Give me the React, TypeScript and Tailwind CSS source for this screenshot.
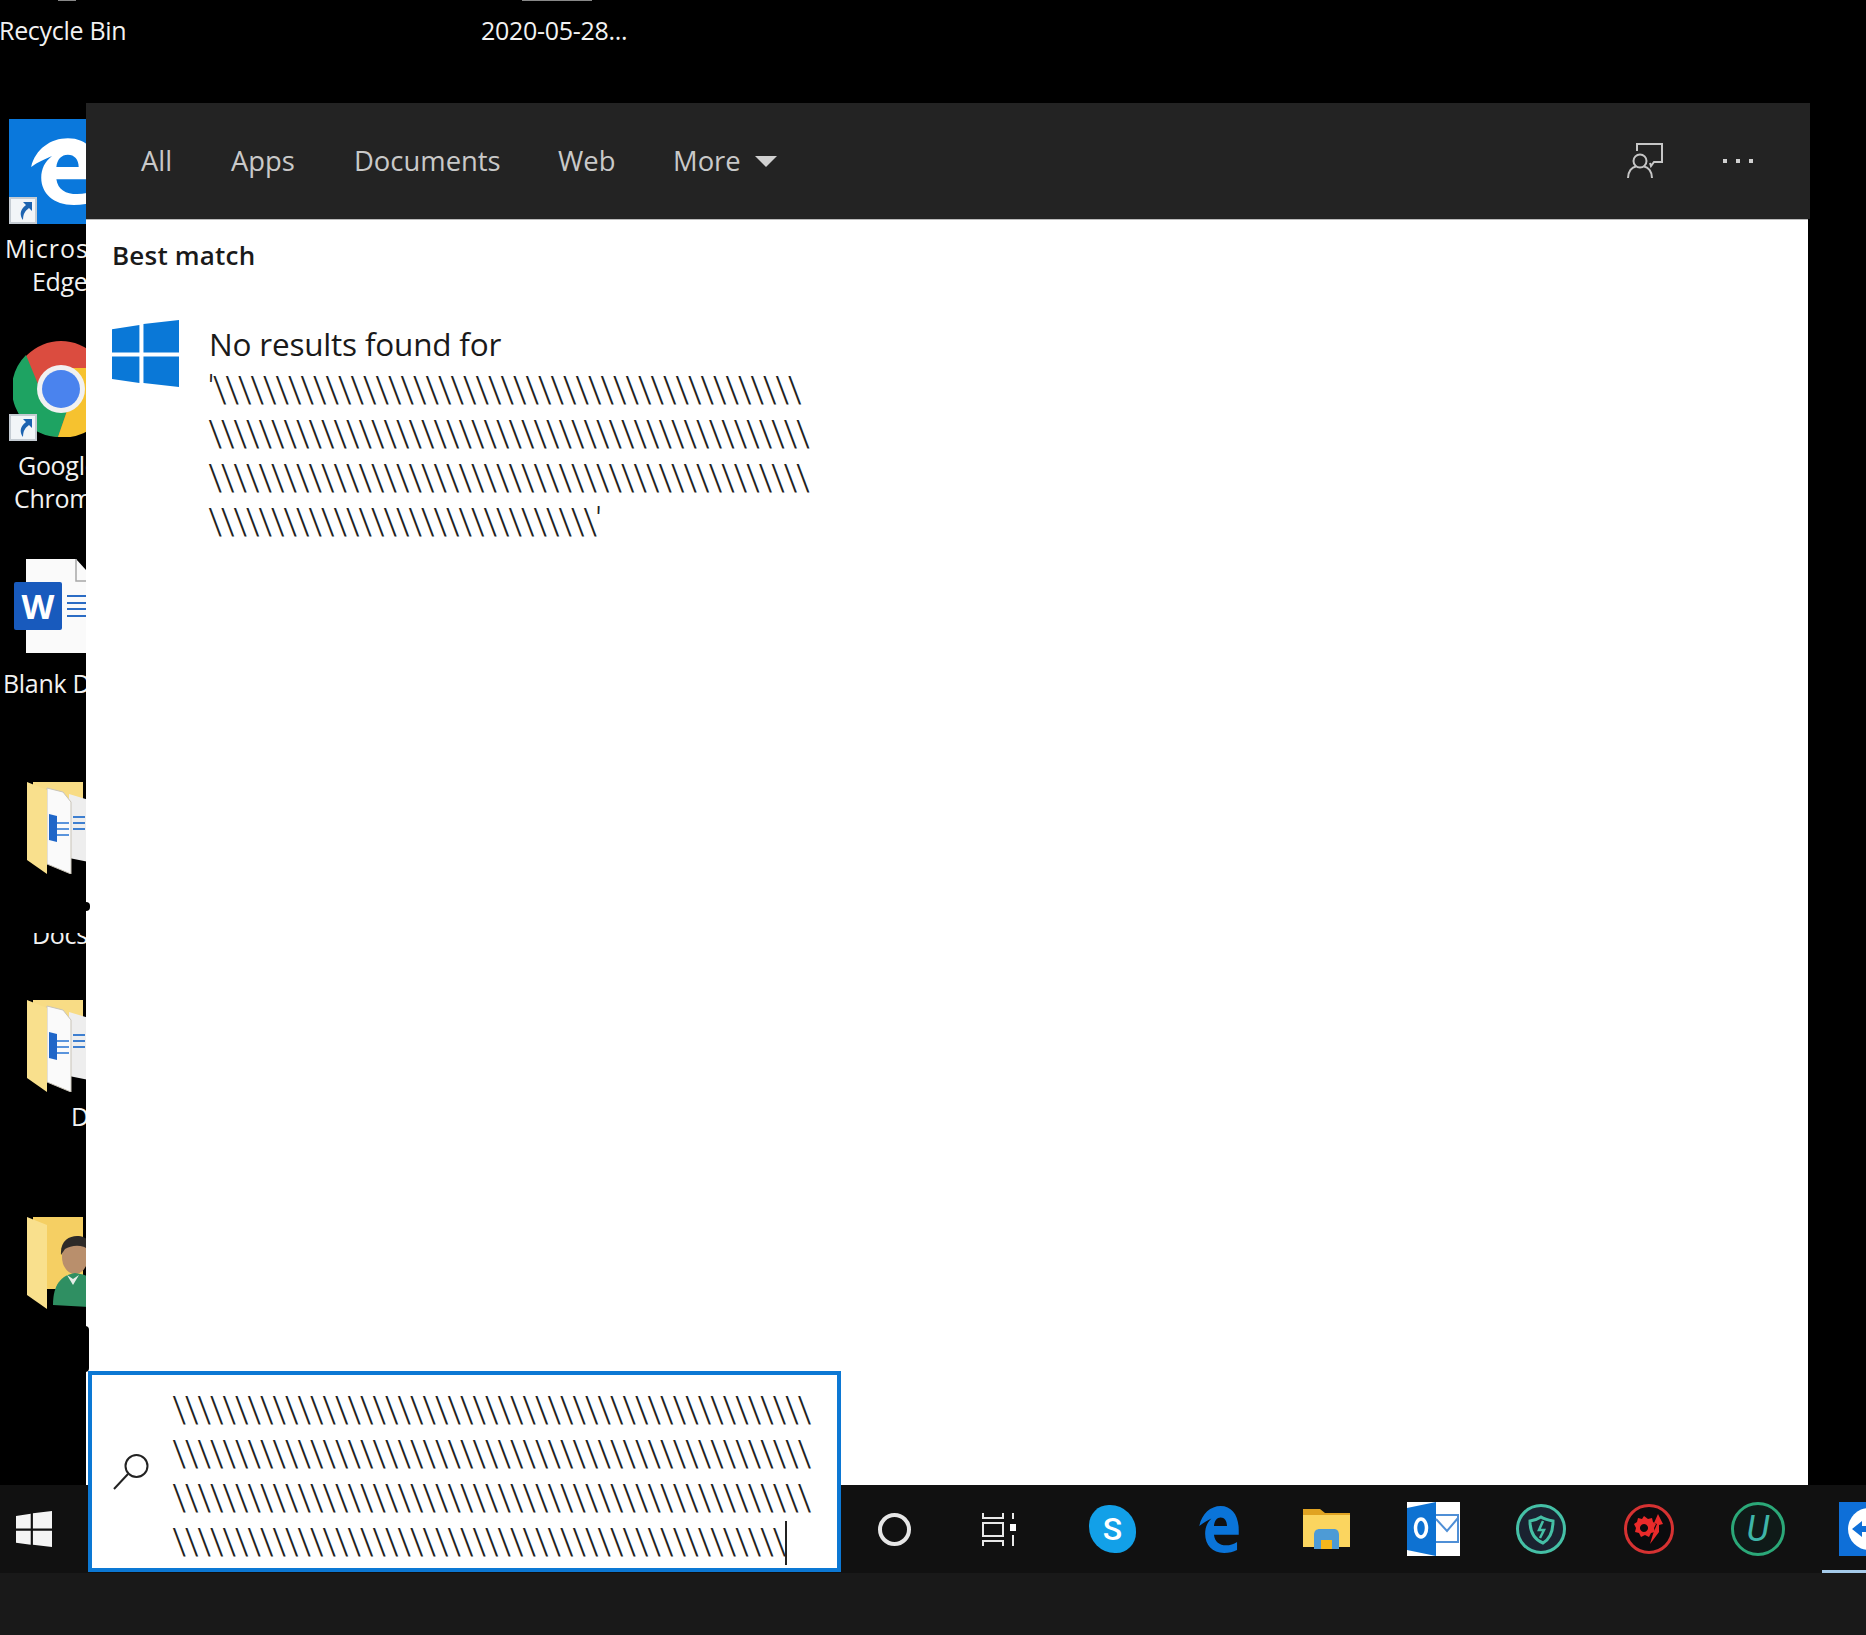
const FONT = "font-['Open_Sans','Noto_Sans',sans-serif]";
const SLASHES = "font-['Roboto',sans-serif] font-light text-[36px] tracking-[-1.7px] text-[#222] whitespace-nowrap";

const slashes = (n: number) => '\\'.repeat(n);

function EdgeLogo({ className, fill }: { className: string; fill: string }) {
  return (
    <svg viewBox="0 0 100 100" className={className} preserveAspectRatio="none">
      <path
        fill={fill}
        fillRule="evenodd"
        d="M3 44C9 18 30 2 54 2c27 0 43 20 43 50v10H38c2 15 13 22 29 22 9 0 18-2 26-7v17c-9 4-19 6-31 6-28 0-45-17-45-40 0-13 5-24 15-32-9 4-20 9-29 16zM38 44h31c0-11-6-18-15-18-9 0-15 7-16 18z"
      />
    </svg>
  );
}

function WindowsLogo({ className, fill }: { className: string; fill: string }) {
  return (
    <svg viewBox="0 0 66 66" className={className} preserveAspectRatio="none">
      <path
        fill={fill}
        d="M0 9l27-4v27H0zM31 4L66 0v32H31zM0 36h27v26L0 58zM31 36h35v30l-35-4z"
      />
    </svg>
  );
}

function ShortcutBadge({ className }: { className: string }) {
  return (
    <svg viewBox="0 0 28 27" className={`absolute ${className}`}>
      <rect x="1" y="1" width="26" height="25" fill="#f2f5f8" stroke="#c5ccd3" strokeWidth="2" />
      <path fill="#1d63b0" d="M14 5h9v9l-3-3c-4 3-6 6-6 12-3-4-4-10 3-15z" />
    </svg>
  );
}

function Chrome() {
  return (
    <svg viewBox="0 0 96 96" className="h-[96px] w-[96px]">
      <circle cx="48" cy="48" r="48" fill="#db4c3f" />
      <path fill="#1ea362" d="M27 48L13 14A48 48 0 0 0 45 96L54 70Z" />
      <path fill="#f6c22f" d="M54 70L45 96A48 48 0 0 0 94 27L48 27Z" />
      <circle cx="48" cy="48" r="24" fill="#f1f1f1" />
      <circle cx="48" cy="48" r="19" fill="#4a83ee" />
    </svg>
  );
}

function DocFolder() {
  return (
    <svg viewBox="0 0 62 92" className="h-[92px] w-[62px]">
      <path fill="#f8dc85" d="M6 0h50v58H6z" />
      <path fill="#eee" d="M42 12l20 6v62l-20-4z" />
      <path fill="#3e7fd0" d="M46 34h12v2H46zM46 40h12v2H46zM46 46h12v2H46z" />
      <path fill="#fafafa" stroke="#c9c4b8" strokeWidth="1" d="M20 6l16 4 8 10v72L20 82z" />
      <path fill="#1f66c8" d="M22 32l8 2v26l-8-2z" />
      <path fill="#5a94dc" d="M30 40h12v2H30zM30 46h12v2H30zM30 52h12v2H30z" />
      <path fill="#f9e08d" d="M0 0l20 8v84L0 78z" />
    </svg>
  );
}

function PersonFolder() {
  return (
    <svg viewBox="0 0 62 92" className="h-[92px] w-[62px]">
      <path fill="#f5cf63" d="M6 0h50v72H6z" />
      <path fill="#f9e08d" d="M0 0l20 8v84L0 78z" />
      <path fill="#000" d="M20 74h12v12H20z" />
      <ellipse cx="48" cy="40" rx="13" ry="17" fill="#b98f6c" />
      <path fill="#2d2a28" d="M34 38c-1-14 8-19 16-19 6 0 12 3 13 8l-1 6c-6-6-18-5-24-1z" />
      <path fill="#2f8f62" d="M26 88c0-20 8-30 22-32 8 1 14 3 14 6v28z" />
      <path fill="#e6eee8" d="M40 58l6 10 6-10-6 4z" />
    </svg>
  );
}

function DesktopLabel({ className, children }: { className: string; children: React.ReactNode }) {
  return (
    <span className={`absolute whitespace-nowrap text-[25px] leading-[30px] tracking-[-0.3px] text-[#f2f2f2] ${className}`}>
      {children}
    </span>
  );
}

function DesktopIcons() {
  return (
    <>
      <DesktopLabel className="left-[-1px] top-[15px]">Recycle Bin</DesktopLabel>
      <DesktopLabel className="left-[481px] top-[15px]">2020-05-28...</DesktopLabel>
      <div className="absolute left-[58px] top-0 h-[1px] w-[18px] bg-[#888]" />
      <div className="absolute left-[522px] top-0 h-[1px] w-[70px] bg-[#888]" />

      <div className="absolute left-[9px] top-[119px] h-[105px] w-[90px] overflow-hidden bg-[#0a78dc]">
        <EdgeLogo className="absolute left-[20px] top-[18px] h-[68px] w-[72px]" fill="#fff" />
      </div>
      <ShortcutBadge className="left-[9px] top-[197px] h-[27px] w-[28px]" />
      <DesktopLabel className="left-[5px] top-[233px]">
        <span className="tracking-[1px]">Microsoft</span>
      </DesktopLabel>
      <DesktopLabel className="left-[32px] top-[266px]">Edge</DesktopLabel>

      <div className="absolute left-[13px] top-[341px]">
        <Chrome />
      </div>
      <ShortcutBadge className="left-[9px] top-[414px] h-[27px] w-[28px]" />
      <DesktopLabel className="left-[18px] top-[450px]">Google</DesktopLabel>
      <DesktopLabel className="left-[14px] top-[483px]">Chrome</DesktopLabel>

      <svg viewBox="0 0 70 94" className="absolute left-[26px] top-[559px] h-[94px] w-[70px]">
        <path fill="#fafafa" d="M0 0h50l20 22v72H0z" />
        <path fill="none" stroke="#a8a8a8" strokeWidth="1.5" d="M50 0v22h20" />
      </svg>
      <div className="absolute left-[67px] top-[595px] flex h-[22px] w-[30px] flex-col justify-between">
        <div className="h-[2px] bg-[#2b6cc4]" />
        <div className="h-[2px] bg-[#2b6cc4]" />
        <div className="h-[2px] bg-[#2b6cc4]" />
        <div className="h-[2px] bg-[#2b6cc4]" />
      </div>
      <div className="absolute left-[14px] top-[582px] flex h-[48px] w-[48px] items-center justify-center rounded-[2px] bg-[#185abd] text-[34px] font-bold leading-none text-white">
        W
      </div>
      <DesktopLabel className="left-[3px] top-[668px]">Blank Document</DesktopLabel>

      <div className="absolute left-[27px] top-[782px]">
        <DocFolder />
      </div>
      <DesktopLabel className="left-[32px] top-[919px]">Docs</DesktopLabel>
      <div className="absolute left-0 top-[918px] h-[15px] w-[86px] bg-black" />
      <div className="absolute left-[27px] top-[1000px]">
        <DocFolder />
      </div>
      <DesktopLabel className="left-[71px] top-[1101px]">Docs</DesktopLabel>
      <div className="absolute left-[27px] top-[1217px]">
        <PersonFolder />
      </div>

      <div className="absolute left-[82px] top-[902px] z-20 h-[9px] w-[8px] rounded-full bg-black" />
      <div className="absolute left-[80px] top-[1326px] z-20 h-[46px] w-[9px] rounded-r-[4px] bg-black" />
    </>
  );
}

function FeedbackIcon() {
  return (
    <svg viewBox="0 0 36 36" className="h-[36px] w-[36px]" fill="none" stroke="#c6c6c6" strokeWidth="2">
      <path d="M10 8V1h25v18h-8l-3 4-1-3" />
      <circle cx="13" cy="18" r="6.5" />
      <path d="M1 35c0-7 4-11 8-11.5M25 35c0-7-4-11-8-11.5" />
    </svg>
  );
}

function SearchPanel() {
  const tabs = [
    { label: 'All', className: 'w-[90px]' },
    { label: 'Apps', className: 'w-[123px]' },
    { label: 'Documents', className: 'w-[204px]' },
    { label: 'Web', className: 'w-[115px]' },
  ];

  return (
    <section className="relative z-10 mt-[103px] flex w-[1724px] flex-col">
      <header className="flex h-[116px] items-center bg-[#232323] pl-[55px] text-[27.4px] text-[#c9c9c9]">
        {tabs.map((tab) => (
          <span key={tab.label} className={tab.className}>
            {tab.label}
          </span>
        ))}
        <span>More</span>
        <span className="ml-[14px] h-0 w-0 border-x-[11px] border-t-[11px] border-x-transparent border-t-[#d0d0d0]" />
        <span className="ml-auto">
          <FeedbackIcon />
        </span>
        <span className="ml-[60px] mr-[57px] flex gap-[9px]">
          <i className="h-[4px] w-[4px] bg-[#d0d0d0]" />
          <i className="h-[4px] w-[4px] bg-[#d0d0d0]" />
          <i className="h-[4px] w-[4px] bg-[#d0d0d0]" />
        </span>
      </header>
      <div className="mr-[2px] flex-1 border-t-[1px] border-[#bbb] bg-white pl-[26px] pt-[17px] text-[#1a1a1a]">
        <p className="text-[26px] font-semibold leading-[36px] tracking-[0.2px]">Best match</p>
        <div className="mt-[47px] flex">
          <WindowsLogo className="h-[67px] w-[67px]" fill="#0a78d7" />
          <div className="ml-[30px]">
            <p className="text-[31.5px] leading-[48px] tracking-[-0.2px]">No results found for</p>
            <div className="-ml-[1px] leading-[44px]">
              <p className={SLASHES}>{`'${slashes(47)}`}</p>
              <p className={SLASHES}>{slashes(48)}</p>
              <p className={SLASHES}>{slashes(48)}</p>
              <p className={SLASHES}>{`${slashes(31)}'`}</p>
            </div>
          </div>
        </div>
      </div>
    </section>
  );
}

function SearchBox() {
  return (
    <div className="absolute left-[88px] top-[1371px] z-20 flex h-[201px] w-[753px] items-center border-[4px] border-[#0c78d4] bg-white">
      <svg viewBox="0 0 36 36" className="ml-[21px] h-[36px] w-[36px] shrink-0" fill="none" stroke="#222" strokeWidth="2">
        <ellipse cx="23.5" cy="12" rx="11" ry="11" />
        <path d="M15 20L1 35" />
      </svg>
      <div className="relative ml-[23px] mt-[9px] leading-[44px]">
        <p className={SLASHES}>{slashes(51)}</p>
        <p className={SLASHES}>{slashes(51)}</p>
        <p className={SLASHES}>{slashes(51)}</p>
        <p className={SLASHES}>{slashes(49)}</p>
        <div className="absolute bottom-[-1px] left-[613px] h-[44px] w-[2px] bg-[#222]" />
      </div>
    </div>
  );
}

function Taskbar() {
  return (
    <footer className="flex h-[88px] items-center bg-[#111]">
      <div className="flex w-[841px] pl-[16px]">
        <WindowsLogo className="h-[36px] w-[36px]" fill="#f4f4f4" />
      </div>
      <div className="flex w-[106px] justify-center">
        <div className="h-[33px] w-[33px] rounded-full border-[4px] border-[#e6e6e6]" />
      </div>
      <div className="flex w-[109px] justify-center pr-[5px]">
        <svg viewBox="0 0 36 33" className="h-[33px] w-[36px]" fill="none" stroke="#e8e8e8" strokeWidth="2">
          <path d="M2 0v5h20V0M2 33v-5h20v5" />
          <rect x="2" y="10" width="20" height="13" />
          <path d="M32 0v6M32 22v11" />
          <rect x="29" y="11" width="6" height="7" fill="#fff" stroke="none" />
        </svg>
      </div>
      <div className="flex w-[109px] justify-center pl-[4px]">
        <div className="flex h-[48px] w-[47px] items-center justify-center rounded-[42%_55%_42%_55%] bg-[#12a0e8] font-['Roboto',sans-serif] text-[32px] font-medium text-white">
          S
        </div>
      </div>
      <div className="flex w-[107px] justify-center">
        <EdgeLogo className="h-[48px] w-[42px]" fill="#0a74d9" />
      </div>
      <div className="flex w-[108px] justify-center">
        <svg viewBox="0 0 47 40" className="h-[40px] w-[47px]">
          <path fill="#e0a322" d="M0 0h17l5 4h25v6H0z" />
          <path fill="#fbd55f" d="M0 6h47v32H0z" />
          <path fill="#4d9bd6" d="M11 40V26c0-4 2-6 6-6h14c3 0 5 2 5 6v14h-7v-9H18v9z" />
          <path fill="#f5b71c" d="M18 31h11v9H18z" />
        </svg>
      </div>
      <div className="flex w-[107.5px] justify-center">
        <svg viewBox="0 0 53 54" className="h-[54px] w-[53px]">
          <rect width="53" height="54" fill="#fff" />
          <path fill="#0e72d2" d="M0 6l29-6v54L0 48z" />
          <ellipse cx="14" cy="26" rx="5.5" ry="9" fill="none" stroke="#fff" strokeWidth="3.5" />
          <path fill="none" stroke="#4f8fd6" strokeWidth="2" d="M29 13h22v27H29M29 17l11 12 11-13" />
        </svg>
      </div>
      <div className="flex w-[107px] justify-center">
        <svg viewBox="0 0 50 50" className="h-[50px] w-[50px]">
          <circle cx="25" cy="25" r="23.5" fill="#1a2230" stroke="#45c0a6" strokeWidth="3" />
          <path fill="none" stroke="#45c0a6" strokeWidth="3" d="M14 17c6-1 8-2 11-4 3 2 7 3 12 4 0 10-3 18-10 22-10-4-13-12-13-22z" />
          <path fill="none" stroke="#45c0a6" strokeWidth="2.5" d="M27 17l-4 9h5l-4 8" />
        </svg>
      </div>
      <div className="flex w-[108px] justify-center">
        <svg viewBox="0 0 50 50" className="h-[50px] w-[50px]">
          <circle cx="25" cy="25" r="23.5" fill="#0b0b0d" stroke="#d63232" strokeWidth="3" />
          <path fill="#ea2a2a" fillRule="evenodd" d="M20 12l4 3 4-1 1 4 3 2-2 4 1 4-4 1-2 4-4-2-4 2-2-4-4-1 1-4-2-4 3-2 1-4 4 1zM20 20a4 4 0 1 0 .01 0z" />
          <path fill="#ea2a2a" d="M34 10l5 10-4 1 0 7-9 12 3-10 4-10-3-1z" />
        </svg>
      </div>
      <div className="flex flex-1 items-center justify-center pr-[9px]">
        <div className="flex h-[54px] w-[54px] items-center justify-center rounded-full border-[3px] border-[#2ba878] bg-[#0f1a18] font-['Roboto',sans-serif] text-[36px] italic text-[#3fb5a8]">
          U
        </div>
      </div>
      <div className="relative flex h-full w-[44px] items-center overflow-hidden pl-[17px]">
        <div className="flex h-[54px] w-[54px] shrink-0 items-center justify-center bg-[#0e6fd8] pl-[5px]">
          <div className="flex h-[42px] w-[42px] items-center justify-center rounded-full bg-white">
            <svg viewBox="0 0 34 18" className="h-[18px] w-[34px]">
              <path fill="#0e6fd8" d="M0 9l10-8v5h14V1l10 8-10 8v-5H10v5z" />
            </svg>
          </div>
        </div>
        <div className="absolute bottom-0 left-0 h-[3px] w-full bg-[#a5cbea]" />
      </div>
    </footer>
  );
}

export default function App() {
  return (
    <div className={`relative flex h-[1635px] w-[1866px] flex-col overflow-hidden bg-black ${FONT}`}>
      <div className="relative flex h-[1485px]">
        <DesktopIcons />
        <div className="w-[86px] shrink-0" />
        <SearchPanel />
      </div>
      <Taskbar />
      <div className="flex-1 bg-[#191919]" />
      <SearchBox />
    </div>
  );
}
